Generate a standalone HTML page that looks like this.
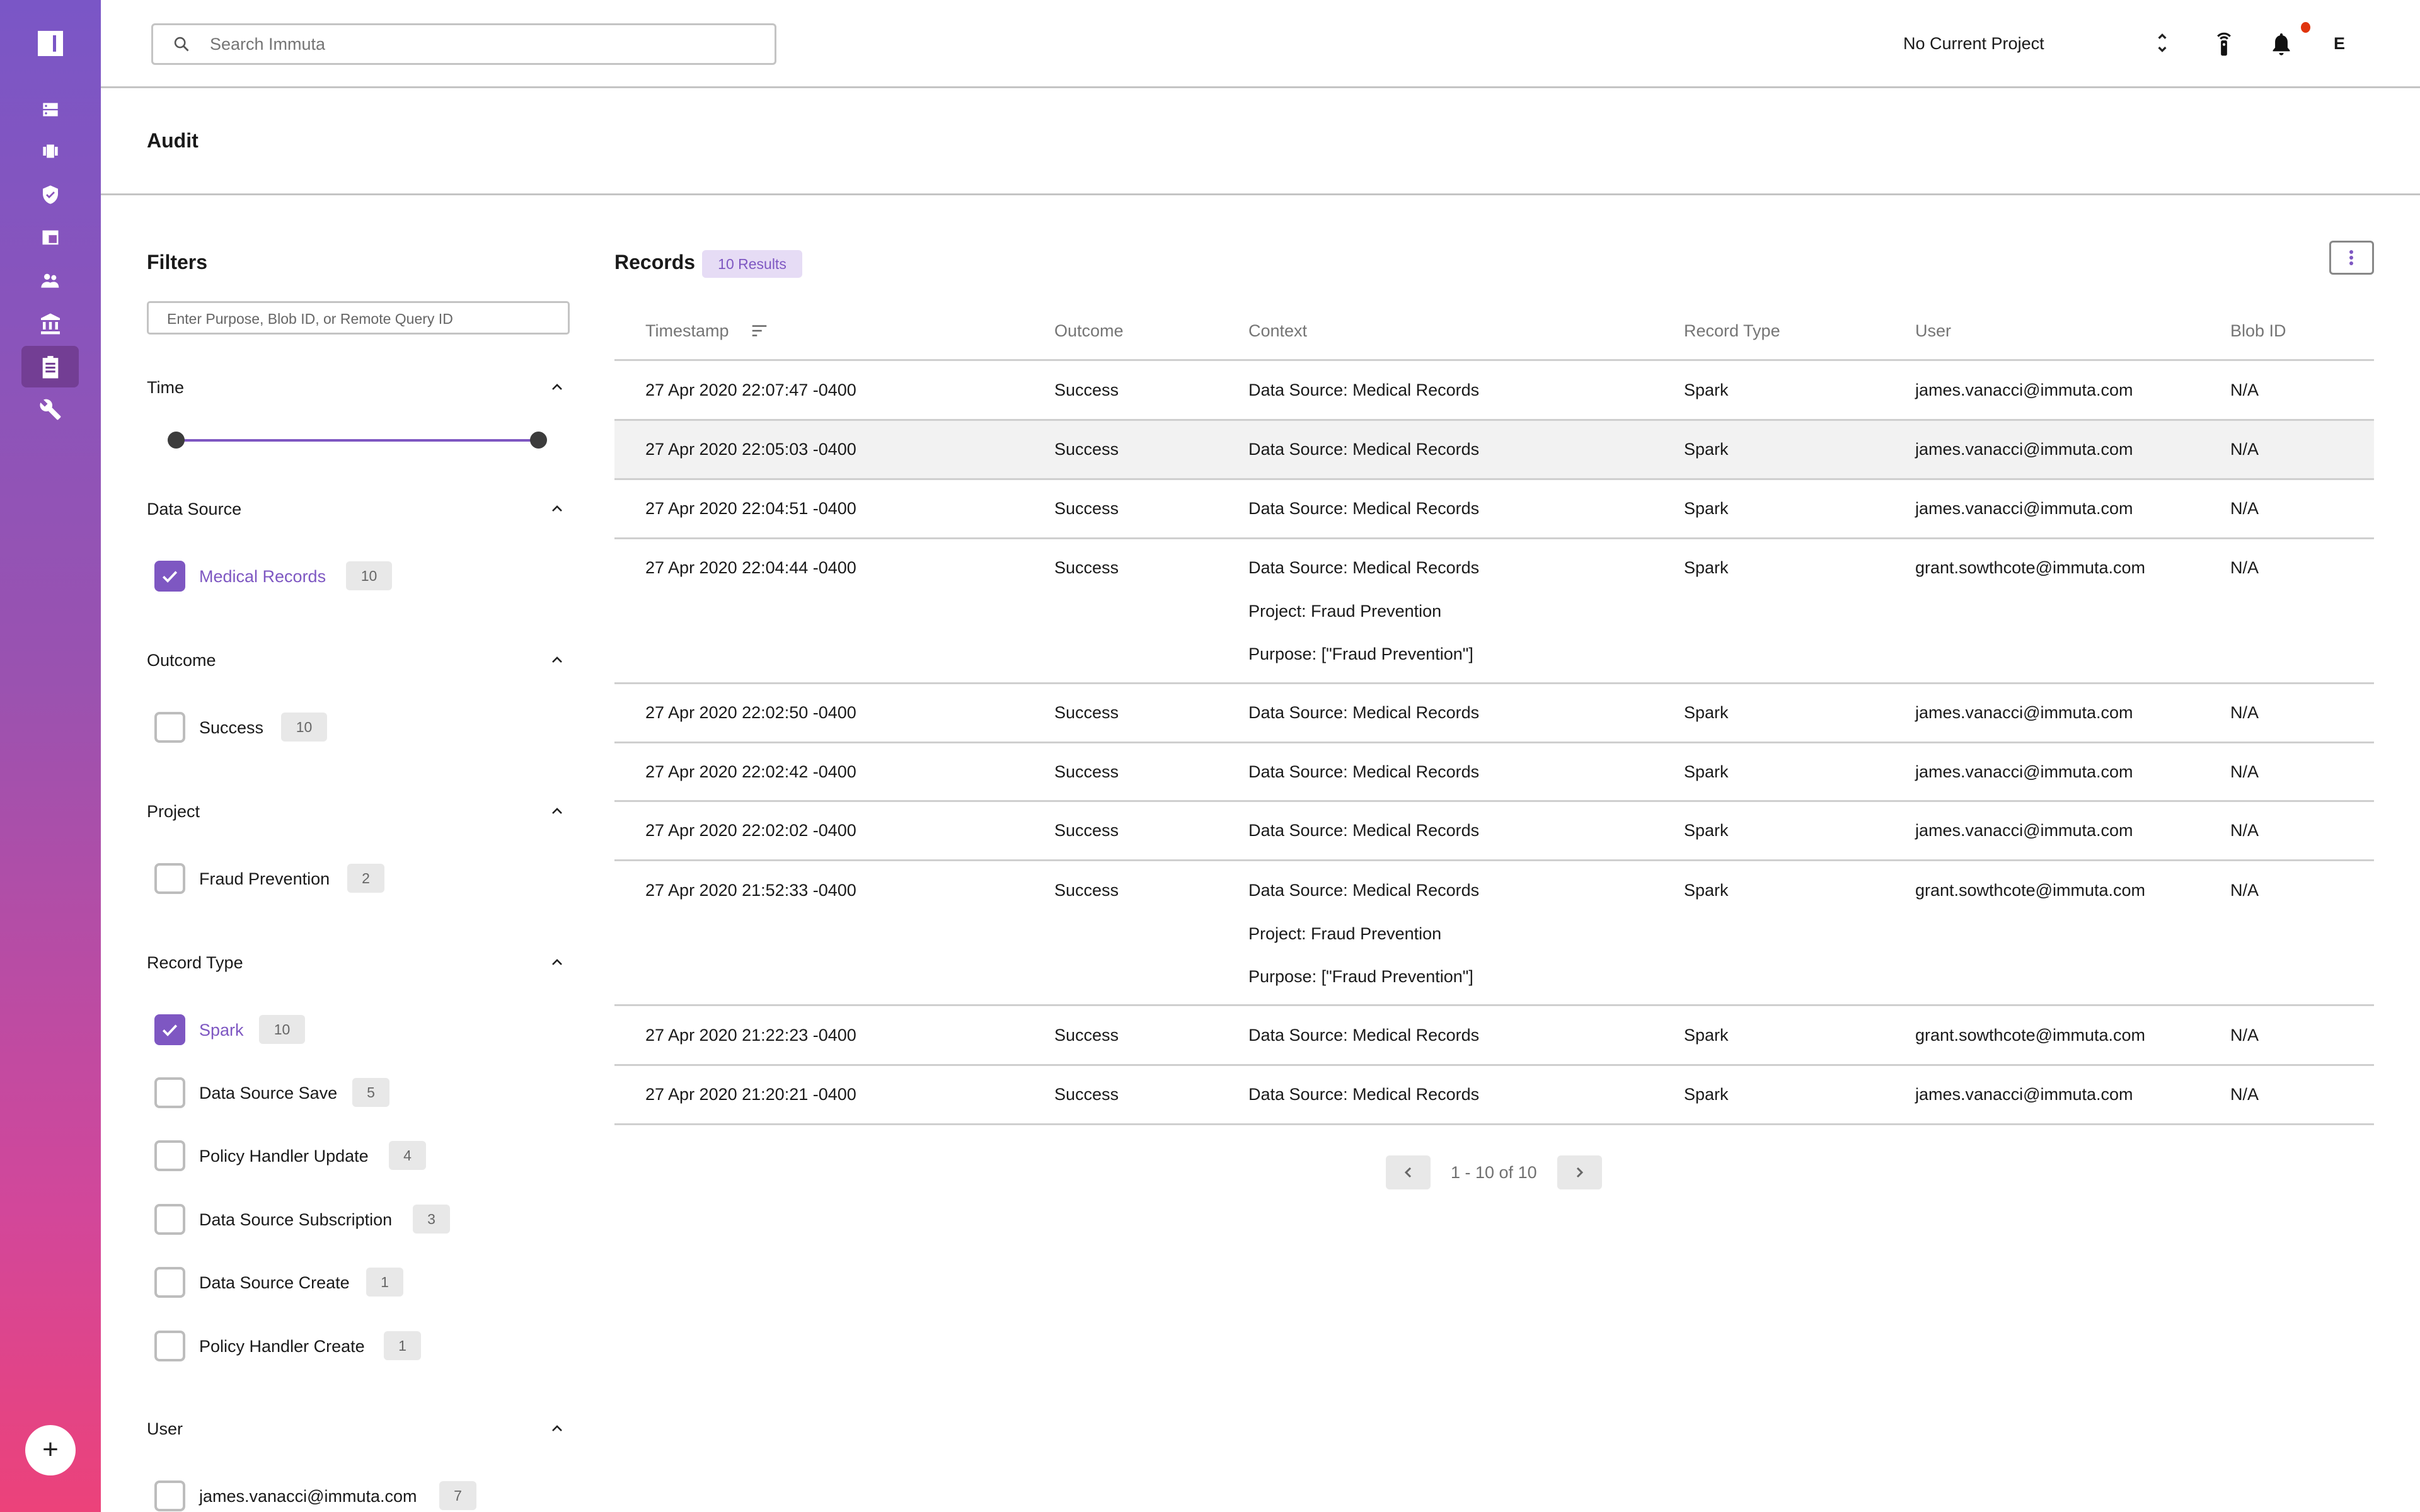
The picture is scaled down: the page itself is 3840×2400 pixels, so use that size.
<!DOCTYPE html>
<html><head><meta charset="utf-8"><style>
*{margin:0;padding:0;box-sizing:border-box}
body{width:3840px;height:2400px;position:relative;background:#fff;font-family:"Liberation Sans",sans-serif;color:#1a1a1a;overflow:hidden;font-size:27px}
.a{position:absolute;white-space:nowrap;line-height:32px}
.side{position:absolute;left:0;top:0;width:160px;height:2400px;background:linear-gradient(180deg,#7a56c6 0%,#9a52b0 45%,#d2479a 80%,#ec427a 100%)}
.hl{position:absolute;left:160px;right:0;height:3px;background:#c4c4c4}
.rl{position:absolute;left:975px;width:2792px;height:3px;background:#cfcfcf}
.cb{position:absolute;left:245px;width:49px;height:49px;border:4px solid #bdbdbd;border-radius:8px;background:#fff}
.cb.on{background:#7e57c2;border-color:#7e57c2}
.cnt{position:absolute;height:46px;background:#e8e8e8;border-radius:6px;color:#666;font-size:23px;line-height:46px;text-align:center}
.sec{font-size:27px}
.chev{position:absolute;left:872px;width:24px;height:24px}
.g{color:#757575}
</style></head><body>
<div class="side">
 <div style="position:absolute;left:60px;top:49px;width:40px;height:40px;background:#fff"><div style="position:absolute;left:24px;top:7px;width:5px;height:26px;background:#7a56c6"></div></div>
 <svg style="position:absolute;left:66px;top:160px" width="28" height="28" viewBox="0 0 24 24" fill="#fff"><path d="M2 3h20v8H2zM2 13h20v8H2z"/><circle cx="6" cy="7" r="1.5" fill="#7a56c6"/><circle cx="6" cy="17" r="1.5" fill="#7a56c6"/></svg>
 <svg style="position:absolute;left:64px;top:226px" width="32" height="28" viewBox="0 0 24 24" fill="#fff"><path d="M7 3h10v18H7zM2 6h4v12H2zM18 6h4v12h-4z"/></svg>
 <svg style="position:absolute;left:64px;top:292px" width="32" height="34" viewBox="0 0 24 24" fill="#fff"><path d="M12 1L3 5v6c0 5.5 3.8 10.7 9 12 5.2-1.3 9-6.5 9-12V5z"/><path d="M7.5 12l3 3 6-6" stroke="#8a54bd" stroke-width="2" fill="none"/></svg>
 <svg style="position:absolute;left:64px;top:362px" width="32" height="30" viewBox="0 0 24 24" fill="#fff"><path d="M2 3h20v18H2z"/><path d="M4 9h16v10H9V9" fill="#8f53b8"/><path d="M9 9v10" stroke="#fff" stroke-width="2"/></svg>
 <svg style="position:absolute;left:62px;top:430px" width="36" height="32" viewBox="0 0 24 24" fill="#fff"><circle cx="8" cy="7" r="3.5"/><circle cx="16" cy="8" r="3"/><path d="M1 20c0-4 3-7 7-7s7 3 7 7zM14 20c0-3-1-5-2-6 1-.6 2.5-1 4-1 3.5 0 6 2.5 6 7z"/></svg>
 <svg style="position:absolute;left:62px;top:496px" width="36" height="36" viewBox="0 0 24 24" fill="#fff"><path d="M12 1L2 6v2h20V6zM4 10h3v8H4zM10.5 10h3v8h-3zM17 10h3v8h-3zM2 20h20v3H2z"/></svg>
 <div style="position:absolute;left:34px;top:549px;width:91px;height:66px;background:#733e94;border-radius:8px"></div>
 <svg style="position:absolute;left:64px;top:562px" width="32" height="40" viewBox="0 0 20 26" fill="#fff"><path d="M2 4h16v21H2z"/><path d="M7 2h6v4H7z"/><path d="M5 10h10M5 14h10M5 18h10" stroke="#733e94" stroke-width="2"/></svg>
 <svg style="position:absolute;left:62px;top:632px" width="36" height="36" viewBox="0 0 24 24" fill="#fff"><path d="M22.7 19l-9.1-9.1c.9-2.3.4-5-1.5-6.9-2-2-5-2.4-7.4-1.3L9 6 6 9 1.6 4.7C.4 7.1.9 10.1 2.9 12.1c1.9 1.9 4.6 2.4 6.9 1.5l9.1 9.1c.4.4 1 .4 1.4 0l2.3-2.3c.5-.4.5-1.1.1-1.4z"/></svg>
 <div style="position:absolute;left:40px;top:2262px;width:80px;height:80px;border-radius:50%;background:#fff;color:#222;font-size:44px;line-height:78px;text-align:center">+</div>
</div>

<!-- header -->
<div style="position:absolute;left:240px;top:37px;width:992px;height:66px;border:3px solid #c4c4c4;border-radius:6px"></div>
<svg style="position:absolute;left:274px;top:56px" width="28" height="28" viewBox="0 0 24 24"><circle cx="10" cy="10" r="6.5" stroke="#555" stroke-width="2.2" fill="none"/><path d="M15 15l6 6" stroke="#555" stroke-width="2.4"/></svg>
<div class="a g" style="left:333px;top:54px">Search Immuta</div>
<div class="a" style="left:3020px;top:53px">No Current Project</div>
<svg style="position:absolute;left:3420px;top:50px" width="22" height="36" viewBox="0 0 12 20" fill="none" stroke="#222" stroke-width="1.8"><path d="M3 6l3-3 3 3M3 14l3 3 3-3"/></svg>
<svg style="position:absolute;left:3512px;top:48px" width="34" height="42" viewBox="0 0 20 26"><path d="M4 6a8 8 0 0 1 12 0M6.5 8.5a4.5 4.5 0 0 1 7 0" stroke="#111" stroke-width="2" fill="none"/><rect x="7" y="10" width="6" height="15" rx="1.5" fill="#111"/><circle cx="10" cy="14" r="1.3" fill="#fff"/></svg>
<svg style="position:absolute;left:3603px;top:50px" width="34" height="40" viewBox="0 0 24 28" fill="#111"><path d="M12 2c-1 0-1.5.7-1.5 1.5v.7C7 5 5 8 5 11.5V18l-2.5 3v1h19v-1L19 18v-6.5c0-3.5-2-6.5-5.5-7.3v-.7C13.5 2.7 13 2 12 2zM9.5 24a2.5 2.5 0 0 0 5 0z"/></svg>
<div style="position:absolute;left:3651px;top:35px;width:15px;height:17px;border-radius:50%;background:#e0340e"></div>
<div class="a" style="left:3703px;top:53px;font-weight:bold">E</div>
<div class="hl" style="top:137px"></div>
<div class="a" style="left:233px;top:205px;font-size:32px;font-weight:bold;line-height:36px">Audit</div>
<div class="hl" style="top:307px"></div>

<!-- filters -->
<div class="a" style="left:233px;top:398px;font-size:32px;font-weight:bold;line-height:36px">Filters</div>
<div style="position:absolute;left:233px;top:478px;width:671px;height:53px;border:3px solid #c4c4c4;border-radius:5px"></div>
<div class="a g" style="left:265px;top:490px;font-size:23px;color:#666">Enter Purpose, Blob ID, or Remote Query ID</div>

<svg width="0" height="0" style="position:absolute"><defs><path id="ch" d="M5 15l7-7 7 7" stroke="#222" stroke-width="2.6" fill="none"/></defs></svg>

<div class="a sec" style="left:233px;top:599px">Time</div>
<svg class="chev" style="top:603px" viewBox="0 0 24 24"><use href="#ch"/></svg>
<div style="position:absolute;left:279px;top:697px;width:576px;height:4px;background:#7e57c2"></div>
<div style="position:absolute;left:266px;top:685px;width:27px;height:27px;border-radius:50%;background:#3c3c3c"></div>
<div style="position:absolute;left:841px;top:685px;width:27px;height:27px;border-radius:50%;background:#3c3c3c"></div>

<div class="a sec" style="left:233px;top:792px">Data Source</div>
<svg class="chev" style="top:796px" viewBox="0 0 24 24"><use href="#ch"/></svg>
<div class="cb on" style="top:890px"><svg width="41" height="41" viewBox="0 0 24 24"><path d="M6 12.5l4 4 8-8.5" stroke="#fff" stroke-width="2.2" fill="none"/></svg></div>
<div class="a" style="left:316px;top:899px;color:#7e57c2">Medical Records</div>
<div class="cnt" style="left:549px;top:891px;width:73px">10</div>

<div class="a sec" style="left:233px;top:1032px">Outcome</div>
<svg class="chev" style="top:1036px" viewBox="0 0 24 24"><use href="#ch"/></svg>
<div class="cb" style="top:1130px"></div>
<div class="a" style="left:316px;top:1139px">Success</div>
<div class="cnt" style="left:446px;top:1131px;width:73px">10</div>

<div class="a sec" style="left:233px;top:1272px">Project</div>
<svg class="chev" style="top:1276px" viewBox="0 0 24 24"><use href="#ch"/></svg>
<div class="cb" style="top:1370px"></div>
<div class="a" style="left:316px;top:1379px">Fraud Prevention</div>
<div class="cnt" style="left:551px;top:1371px;width:59px">2</div>

<div class="a sec" style="left:233px;top:1512px">Record Type</div>
<svg class="chev" style="top:1516px" viewBox="0 0 24 24"><use href="#ch"/></svg>
<div class="cb on" style="top:1610px"><svg width="41" height="41" viewBox="0 0 24 24"><path d="M6 12.5l4 4 8-8.5" stroke="#fff" stroke-width="2.2" fill="none"/></svg></div>
<div class="a" style="left:316px;top:1619px;color:#7e57c2">Spark</div>
<div class="cnt" style="left:411px;top:1611px;width:73px">10</div>
<div class="cb" style="top:1710px"></div><div class="a" style="left:316px;top:1719px">Data Source Save</div><div class="cnt" style="left:559px;top:1711px;width:59px">5</div>
<div class="cb" style="top:1810px"></div><div class="a" style="left:316px;top:1819px">Policy Handler Update</div><div class="cnt" style="left:617px;top:1811px;width:59px">4</div>
<div class="cb" style="top:1911px"></div><div class="a" style="left:316px;top:1920px">Data Source Subscription</div><div class="cnt" style="left:655px;top:1912px;width:59px">3</div>
<div class="cb" style="top:2011px"></div><div class="a" style="left:316px;top:2020px">Data Source Create</div><div class="cnt" style="left:581px;top:2012px;width:59px">1</div>
<div class="cb" style="top:2112px"></div><div class="a" style="left:316px;top:2121px">Policy Handler Create</div><div class="cnt" style="left:609px;top:2113px;width:59px">1</div>

<div class="a sec" style="left:233px;top:2252px">User</div>
<svg class="chev" style="top:2256px" viewBox="0 0 24 24"><use href="#ch"/></svg>
<div class="cb" style="top:2350px"></div><div class="a" style="left:316px;top:2359px">james.vanacci@immuta.com</div><div class="cnt" style="left:697px;top:2351px;width:59px">7</div>

<!-- records -->
<div class="a" style="left:975px;top:398px;font-size:32px;font-weight:bold;line-height:36px">Records</div>
<div style="position:absolute;left:1114px;top:397px;width:159px;height:44px;background:#e6dcf5;border-radius:6px;color:#7e57c2;font-size:23px;line-height:44px;text-align:center">10 Results</div>
<div style="position:absolute;left:3696px;top:382px;width:71px;height:54px;border:3px solid #888;border-radius:6px"><svg width="65" height="48" viewBox="0 0 65 48"><circle cx="32" cy="15" r="3" fill="#7e57c2"/><circle cx="32" cy="24" r="3" fill="#7e57c2"/><circle cx="32" cy="33" r="3" fill="#7e57c2"/></svg></div>

<div class="a g" style="left:1024px;top:509px">Timestamp</div>
<svg style="position:absolute;left:1190px;top:510px" width="30" height="30" viewBox="0 0 24 24" fill="#666"><path d="M3 5h18v2H3zM3 11h12v2H3zM3 17h6v2H3z"/></svg>
<div class="a g" style="left:1673px;top:509px">Outcome</div>
<div class="a g" style="left:1981px;top:509px">Context</div>
<div class="a g" style="left:2672px;top:509px">Record Type</div>
<div class="a g" style="left:3039px;top:509px">User</div>
<div class="a g" style="left:3539px;top:509px">Blob ID</div>
<div class="rl" style="top:570px"></div>

<div style="position:absolute;left:975px;top:668px;width:2792px;height:92px;background:#f2f2f2"></div>

<div id="rows"></div>
<div class="rl" style="top:665px"></div>
<div class="rl" style="top:759px"></div>
<div class="rl" style="top:853px"></div>
<div class="rl" style="top:1083px"></div>
<div class="rl" style="top:1177px"></div>
<div class="rl" style="top:1270px"></div>
<div class="rl" style="top:1364px"></div>
<div class="rl" style="top:1594px"></div>
<div class="rl" style="top:1689px"></div>
<div class="rl" style="top:1783px"></div>

<!-- row 1 -->
<div class="a" style="left:1024px;top:603px">27 Apr 2020 22:07:47 -0400</div><div class="a" style="left:1673px;top:603px">Success</div><div class="a" style="left:1981px;top:603px">Data Source: Medical Records</div><div class="a" style="left:2672px;top:603px">Spark</div><div class="a" style="left:3039px;top:603px">james.vanacci@immuta.com</div><div class="a" style="left:3539px;top:603px">N/A</div>
<div class="a" style="left:1024px;top:697px">27 Apr 2020 22:05:03 -0400</div><div class="a" style="left:1673px;top:697px">Success</div><div class="a" style="left:1981px;top:697px">Data Source: Medical Records</div><div class="a" style="left:2672px;top:697px">Spark</div><div class="a" style="left:3039px;top:697px">james.vanacci@immuta.com</div><div class="a" style="left:3539px;top:697px">N/A</div>
<div class="a" style="left:1024px;top:791px">27 Apr 2020 22:04:51 -0400</div><div class="a" style="left:1673px;top:791px">Success</div><div class="a" style="left:1981px;top:791px">Data Source: Medical Records</div><div class="a" style="left:2672px;top:791px">Spark</div><div class="a" style="left:3039px;top:791px">james.vanacci@immuta.com</div><div class="a" style="left:3539px;top:791px">N/A</div>
<div class="a" style="left:1024px;top:885px">27 Apr 2020 22:04:44 -0400</div><div class="a" style="left:1673px;top:885px">Success</div><div class="a" style="left:1981px;top:885px">Data Source: Medical Records</div><div class="a" style="left:2672px;top:885px">Spark</div><div class="a" style="left:3039px;top:885px">grant.sowthcote@immuta.com</div><div class="a" style="left:3539px;top:885px">N/A</div>
<div class="a" style="left:1981px;top:954px">Project: Fraud Prevention</div><div class="a" style="left:1981px;top:1022px">Purpose: ["Fraud Prevention"]</div>
<div class="a" style="left:1024px;top:1115px">27 Apr 2020 22:02:50 -0400</div><div class="a" style="left:1673px;top:1115px">Success</div><div class="a" style="left:1981px;top:1115px">Data Source: Medical Records</div><div class="a" style="left:2672px;top:1115px">Spark</div><div class="a" style="left:3039px;top:1115px">james.vanacci@immuta.com</div><div class="a" style="left:3539px;top:1115px">N/A</div>
<div class="a" style="left:1024px;top:1209px">27 Apr 2020 22:02:42 -0400</div><div class="a" style="left:1673px;top:1209px">Success</div><div class="a" style="left:1981px;top:1209px">Data Source: Medical Records</div><div class="a" style="left:2672px;top:1209px">Spark</div><div class="a" style="left:3039px;top:1209px">james.vanacci@immuta.com</div><div class="a" style="left:3539px;top:1209px">N/A</div>
<div class="a" style="left:1024px;top:1302px">27 Apr 2020 22:02:02 -0400</div><div class="a" style="left:1673px;top:1302px">Success</div><div class="a" style="left:1981px;top:1302px">Data Source: Medical Records</div><div class="a" style="left:2672px;top:1302px">Spark</div><div class="a" style="left:3039px;top:1302px">james.vanacci@immuta.com</div><div class="a" style="left:3539px;top:1302px">N/A</div>
<div class="a" style="left:1024px;top:1397px">27 Apr 2020 21:52:33 -0400</div><div class="a" style="left:1673px;top:1397px">Success</div><div class="a" style="left:1981px;top:1397px">Data Source: Medical Records</div><div class="a" style="left:2672px;top:1397px">Spark</div><div class="a" style="left:3039px;top:1397px">grant.sowthcote@immuta.com</div><div class="a" style="left:3539px;top:1397px">N/A</div>
<div class="a" style="left:1981px;top:1466px">Project: Fraud Prevention</div><div class="a" style="left:1981px;top:1534px">Purpose: ["Fraud Prevention"]</div>
<div class="a" style="left:1024px;top:1627px">27 Apr 2020 21:22:23 -0400</div><div class="a" style="left:1673px;top:1627px">Success</div><div class="a" style="left:1981px;top:1627px">Data Source: Medical Records</div><div class="a" style="left:2672px;top:1627px">Spark</div><div class="a" style="left:3039px;top:1627px">grant.sowthcote@immuta.com</div><div class="a" style="left:3539px;top:1627px">N/A</div>
<div class="a" style="left:1024px;top:1721px">27 Apr 2020 21:20:21 -0400</div><div class="a" style="left:1673px;top:1721px">Success</div><div class="a" style="left:1981px;top:1721px">Data Source: Medical Records</div><div class="a" style="left:2672px;top:1721px">Spark</div><div class="a" style="left:3039px;top:1721px">james.vanacci@immuta.com</div><div class="a" style="left:3539px;top:1721px">N/A</div>

<!-- pagination -->
<div style="position:absolute;left:2199px;top:1834px;width:71px;height:54px;background:#e8e8e8;border-radius:6px"><svg width="71" height="54" viewBox="0 0 71 54"><path d="M39 20l-7 7 7 7" stroke="#666" stroke-width="3" fill="none"/></svg></div>
<div class="a" style="left:2302px;top:1845px;color:#707070">1 - 10 of 10</div>
<div style="position:absolute;left:2471px;top:1834px;width:71px;height:54px;background:#e8e8e8;border-radius:6px"><svg width="71" height="54" viewBox="0 0 71 54"><path d="M32 20l7 7-7 7" stroke="#666" stroke-width="3" fill="none"/></svg></div>
</body></html>
